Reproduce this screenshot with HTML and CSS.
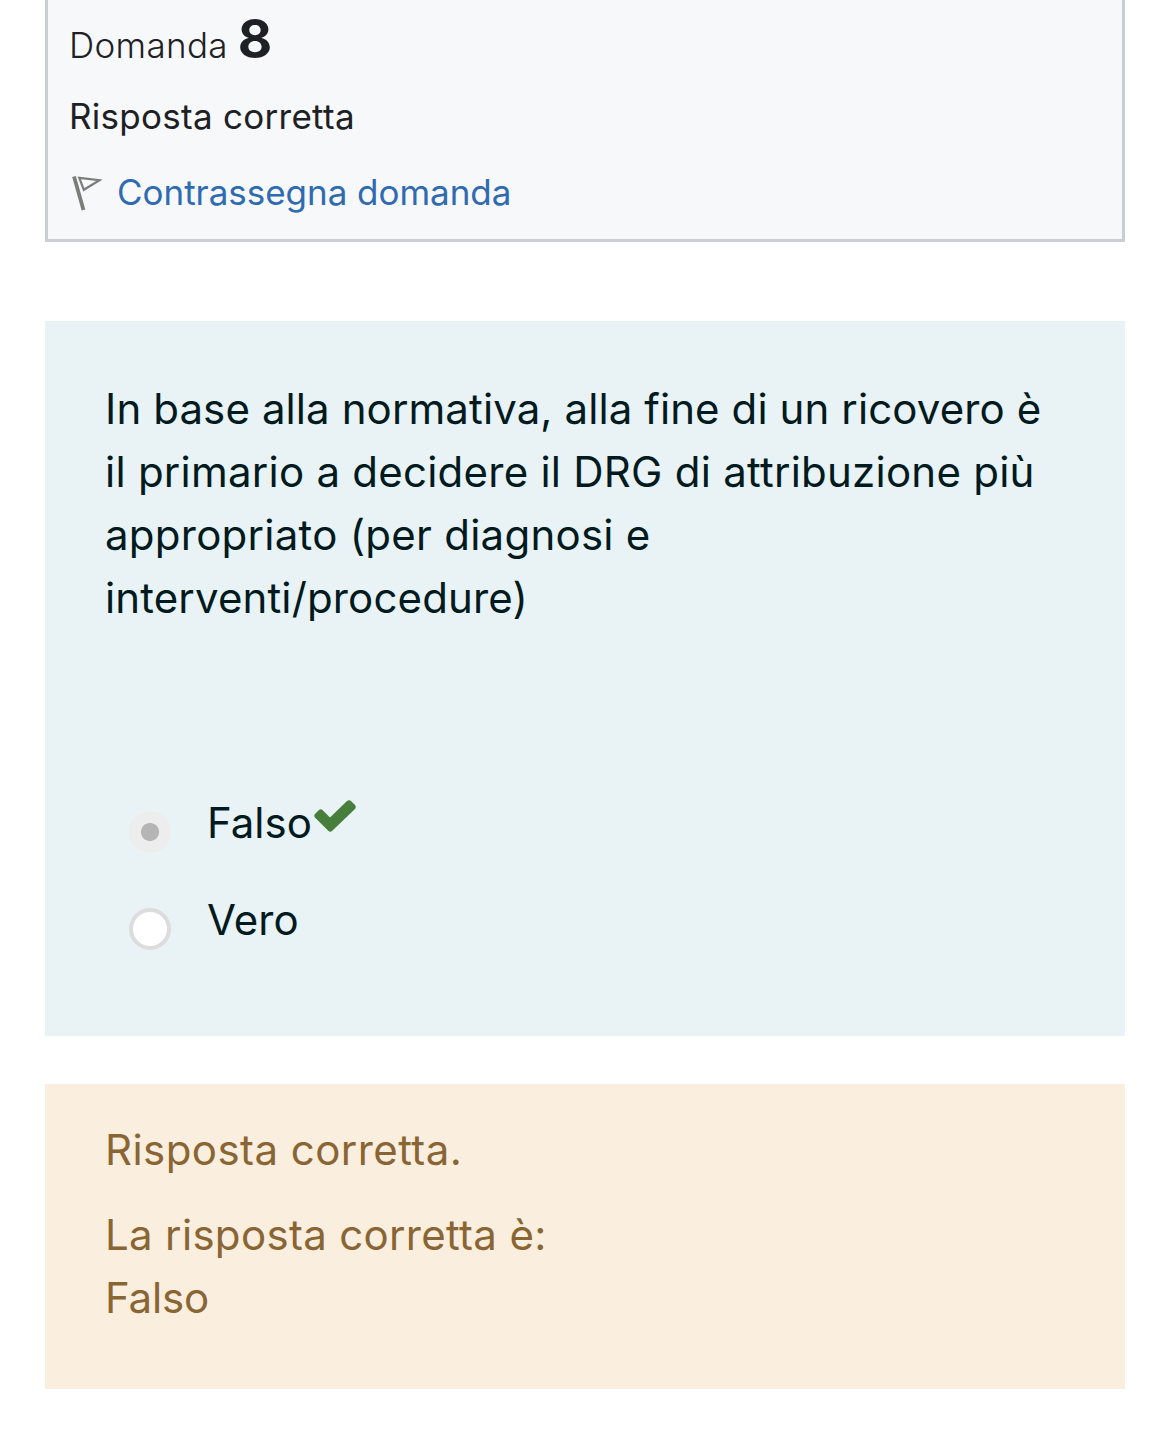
FILE: index.html
```html
<!DOCTYPE html>
<html lang="it">
<head>
<meta charset="utf-8">
<title>Domanda 8</title>
<link rel="stylesheet" href="styles.css">
</head>
<body>
<main class="page">
  <section class="info">
    <h3 class="number"><span class="t-dom">Domanda</span> <span class="qno">8</span></h3>
    <div class="state"><span class="t-state">Risposta corretta</span></div>
    <div class="flag">
      <svg class="flag-icon" width="36" height="38" viewBox="0 0 36 38" fill="none" stroke="#7c7c7a"><path d="M5 3.500L14.500 37" stroke-width="3.800"/><path d="M10.300 4.900L30.500 7.200L14.800 16.800Z" stroke-width="2.200"/></svg>
      <a class="t-flag">Contrassegna domanda</a>
    </div>
  </section>
  <section class="question">
    <p class="qtext"><span class="q1">In base alla normativa, alla fine di un ricovero è</span><br><span class="q2">il primario a decidere il DRG di attribuzione più</span><br><span class="q3">appropriato (per diagnosi e</span><br><span class="q4">interventi/procedure)</span></p>
    <div class="answer"><span class="radio checked"></span><span class="label">Falso</span><svg class="check" width="42" height="32" viewBox="0 0 42 32"><path d="M1 17.500Q-.5 15.500 1 14L5 10Q6.500 8.500 8.500 10L16 17.500L33 1Q35 -.5 37 1L41 5Q42.500 7 41 9L18 31Q16 32.500 14.500 31Z" fill="#477e3c"/></svg></div>
    <div class="answer"><span class="radio"></span><span class="label">Vero</span></div>
  </section>
  <section class="feedback">
    <p class="first"><span class="f1">Risposta corretta.</span></p>
    <p><span class="f2">La risposta corretta è:</span><br><span class="f3">Falso</span></p>
  </section>
</main>
</body>
</html>
```
FILE: styles.css
```css
* { box-sizing: border-box; }
body { margin: 0; background: #fff; font-family: Inter, sans-serif; }
p, h3 { margin: 0; font-weight: 400; }
.page { padding: 0 45px; }
.info { height: 242px; border: 3px solid #caced3; border-top: 0; background: #f7f8fa; padding: 7px 21px 0; color: #1d2125; font-size: 35px; }
.number { height: 76px; line-height: 64px; font-size: 35px; }
.t-dom { font-weight: 300; letter-spacing: .32px; }
.qno { font-size: 53px; font-weight: 700; }
.state { height: 66px; line-height: 66px; }
.t-state { letter-spacing: .28px; }
.flag { display: flex; align-items: center; height: 86px; gap: 12px; color: #2f6bb0; }
.t-flag { letter-spacing: -.03px; }
.question { margin-top: 79px; height: 715px; padding: 56px 60px 0; background: #e9f2f5; color: #001a1e; font-size: 42px; line-height: 63px; }
.qtext { height: 401px; }
.q1 { letter-spacing: .1px; }
.q2 { letter-spacing: .24px; }
.q3 { letter-spacing: .26px; }
.q4 { letter-spacing: .14px; }
.answer { display: flex; height: 97px; padding-left: 24px; align-items: flex-start; }
.radio { width: 42px; height: 42px; margin: 33px 36px 0 0; border-radius: 50%; border: 4.500px solid #dcdcdc; background: #fff; }
.checked { background: radial-gradient(circle, #b5b5b6 8.5px, #ededed 9.5px); border-color: #ededed; }
.label { padding-top: 13px; }
.check { margin: 22px 0 0 2px; }
.feedback { margin-top: 48px; height: 305px; padding: 34px 60px 0; background: #faeedf; color: #8a6534; font-size: 42px; line-height: 63px; }
.first { margin-bottom: 22px; }
.f1 { letter-spacing: .44px; }
.f2 { letter-spacing: .32px; }
.f3 { letter-spacing: -.2px; }
```
